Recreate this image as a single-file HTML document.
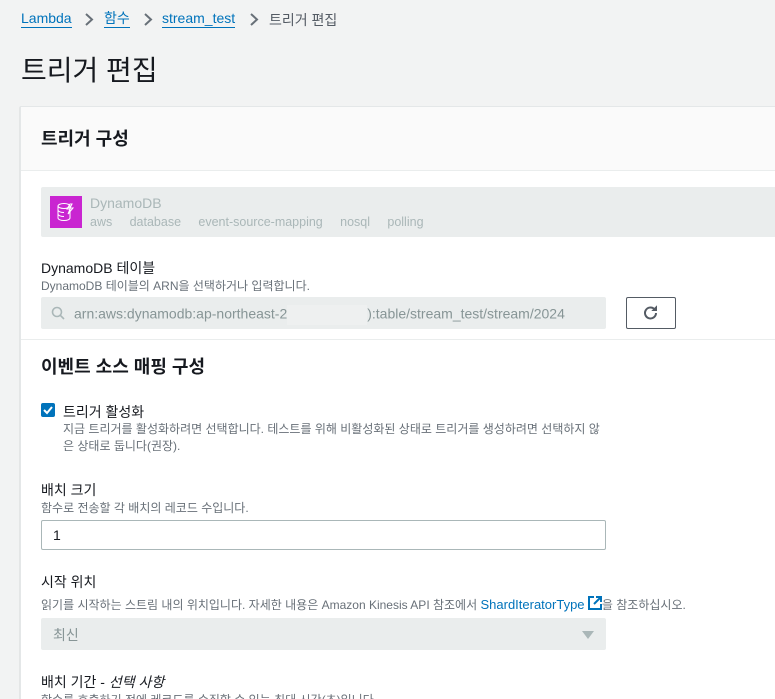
<!DOCTYPE html>
<html><head><meta charset="utf-8"><style>
*{box-sizing:border-box;margin:0;padding:0}
html{width:775px;height:699px;overflow:hidden}
body{width:775px;height:699px;overflow:hidden;background:#f2f3f3;font-family:"Liberation Sans","Noto Sans CJK KR",sans-serif;color:#16191f;position:relative}
.a{position:absolute;white-space:nowrap}
.lk{color:#0073bb;border-bottom:1px solid #0073bb;line-height:17px}
.panel{position:absolute;left:20px;top:106px;width:800px;height:593px;background:#fff;border:1px solid #e4e7e8;border-bottom:none;box-shadow:0 1px 1px rgba(0,28,36,.3);overflow:hidden}
.hdr{position:absolute;left:0;top:0;right:0;height:64px;background:#fafafa;border-bottom:1px solid #eaeded}
.lbl{font-size:14px;color:#16191f}
.desc{font-size:12px;color:#687078}
</style></head><body>
<div class="a lk" style="left:21px;top:10px;font-size:14px">Lambda</div>
<svg class="a" style="left:83px;top:12px" width="12" height="15" viewBox="0 0 12 15"><path d="M3 2l6 5.5L3 13" fill="none" stroke="#687078" stroke-width="2"/></svg>
<div class="a lk" style="left:104px;top:10px;font-size:14px">함수</div>
<svg class="a" style="left:142px;top:12px" width="12" height="15" viewBox="0 0 12 15"><path d="M3 2l6 5.5L3 13" fill="none" stroke="#687078" stroke-width="2"/></svg>
<div class="a lk" style="left:162px;top:10px;font-size:14px">stream_test</div>
<svg class="a" style="left:248px;top:12px" width="12" height="15" viewBox="0 0 12 15"><path d="M3 2l6 5.5L3 13" fill="none" stroke="#687078" stroke-width="2"/></svg>
<div class="a" style="left:269px;top:10px;font-size:14px;color:#545b64">트리거 편집</div>
<div class="a" style="left:21px;top:49px;font-size:28px;color:#16191f">트리거 편집</div>
<div class="panel">
 <div class="hdr"></div>
 <div class="a" style="left:20px;top:18px;font-size:18px;font-weight:bold">트리거 구성</div>
 <div class="a" style="left:20px;top:80px;width:760px;height:50px;background:#eaeded;border-radius:2px"></div>
 <div class="a" style="left:29px;top:89px;width:32px;height:32px;background:#c925d1">
  <svg width="32" height="32" viewBox="0 0 32 32" fill="none" stroke="#fff" stroke-width="1"><ellipse cx="14" cy="10" rx="6" ry="2.5"/><path d="M8 10v12c0 1.4 2.7 2.5 6 2.5s6-1.1 6-2.5V10M8 14c0 1.4 2.7 2.5 6 2.5M8 18c0 1.4 2.7 2.5 6 2.5M20 8l-3 5h3l-2 5 5-6h-3l2-4z"/></svg>
 </div>
 <div class="a" style="left:69px;top:88px;font-size:14px;color:#aab7b8">DynamoDB</div>
 <div class="a" style="left:69px;top:108px;font-size:12.5px;color:#aab7b8">aws&nbsp;&nbsp;&nbsp;&nbsp;&nbsp;database&nbsp;&nbsp;&nbsp;&nbsp;&nbsp;event-source-mapping&nbsp;&nbsp;&nbsp;&nbsp;&nbsp;nosql&nbsp;&nbsp;&nbsp;&nbsp;&nbsp;polling</div>
 <div class="a lbl" style="left:20px;top:151px">DynamoDB 테이블</div>
 <div class="a desc" style="left:20px;top:170px">DynamoDB 테이블의 ARN을 선택하거나 입력합니다.</div>
 <div class="a" style="left:20px;top:190px;width:565px;height:32px;background:#eaeded;border-radius:2px;overflow:hidden">
  <div class="a" style="left:33px;top:8px;font-size:14px;color:#879596">arn:aws:dynamodb:ap-northeast-2<span style="display:inline-block;width:80px;height:20px;background:#eef0f0;vertical-align:middle"></span>):table/stream_test/stream/2024</div>
 </div>
 <svg class="a" style="left:30px;top:199px" width="14" height="14" viewBox="0 0 14 14" fill="none" stroke="#aab7b8" stroke-width="1.6"><circle cx="6" cy="6" r="4.5"/><path d="M9.3 9.3L13 13"/></svg>
 <div class="a" style="left:605px;top:190px;width:50px;height:32px;border:1px solid #545b64;border-radius:2px;background:#fff"></div>
 <svg class="a" style="left:621px;top:197px" width="18" height="18" viewBox="0 0 18 18" fill="none" stroke="#545b64" stroke-width="2"><path d="M14 9a5.5 5.5 0 1 1-1.8-4.1"/><path d="M14.5 2.5v4h-4z" fill="#545b64" stroke-width="1"/></svg>
 <div class="a" style="left:0;top:232px;width:800px;height:1px;background:#eaeded"></div>
 <div class="a" style="left:20px;top:246px;font-size:18px;font-weight:bold">이벤트 소스 매핑 구성</div>
 <div class="a" style="left:20px;top:296px;width:14px;height:14px;background:#0073bb;border-radius:2px"><svg width="14" height="14" viewBox="0 0 14 14"><path d="M3 7l3 3 5-6" fill="none" stroke="#fff" stroke-width="2"/></svg></div>
 <div class="a lbl" style="left:42px;top:295px">트리거 활성화</div>
 <div class="a desc" style="left:42px;top:314px;line-height:17px;white-space:normal;width:540px">지금 트리거를 활성화하려면 선택합니다. 테스트를 위해 비활성화된 상태로 트리거를 생성하려면 선택하지 않은 상태로 둡니다(권장).</div>
 <div class="a lbl" style="left:20px;top:373px">배치 크기</div>
 <div class="a desc" style="left:20px;top:392px">함수로 전송할 각 배치의 레코드 수입니다.</div>
 <div class="a" style="left:20px;top:413px;width:565px;height:30px;border:1px solid #aab7b8;border-radius:2px;font-size:14px;padding:6px 11px">1</div>
 <div class="a lbl" style="left:20px;top:465px">시작 위치</div>
 <div class="a desc" style="left:20px;top:489px">읽기를 시작하는 스트림 내의 위치입니다. 자세한 내용은 Amazon Kinesis API 참조에서 <span style="color:#0073bb;font-size:13px">ShardIteratorType</span> <svg width="14" height="14" viewBox="0 0 14 14" style="vertical-align:-1px"><path d="M6 1H1v12h12V8" fill="none" stroke="#0073bb" stroke-width="2"/><path d="M8 1h5v5M13 1L6 8" fill="none" stroke="#0073bb" stroke-width="2"/></svg>을 참조하십시오.</div>
 <div class="a" style="left:20px;top:511px;width:565px;height:32px;background:#eaeded;border-radius:2px"></div>
 <div class="a" style="left:32px;top:518px;font-size:14px;color:#879596">최신</div>
 <div class="a" style="left:561px;top:524px;width:0;height:0;border-left:6px solid transparent;border-right:6px solid transparent;border-top:8px solid #aab7b8"></div>
 <div class="a lbl" style="left:20px;top:565px">배치 기간 - <i>선택 사항</i></div>
 <div class="a desc" style="left:20px;top:584px">함수를 호출하기 전에 레코드를 수집할 수 있는 최대 시간(초)입니다.</div>
</div>
</body></html>
